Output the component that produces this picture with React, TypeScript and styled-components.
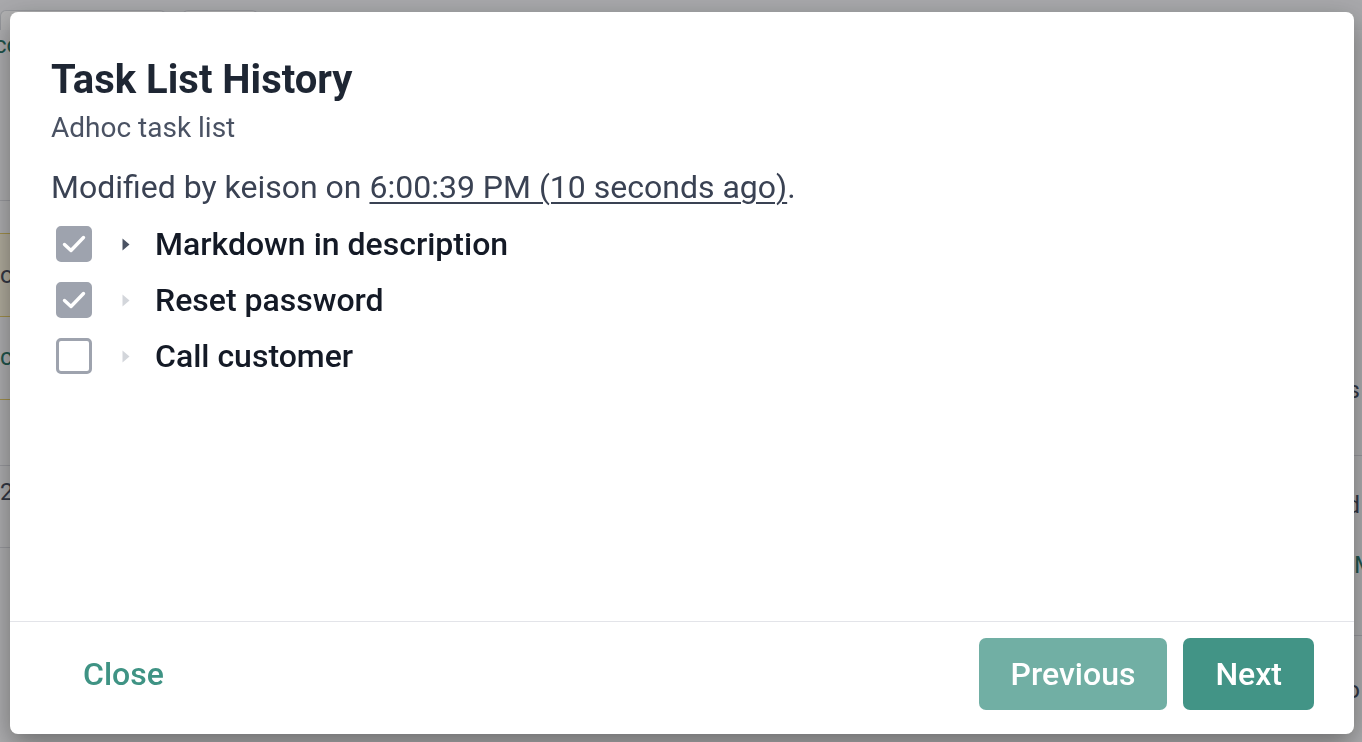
import React from "react";
import styled, { createGlobalStyle } from "styled-components";

const GlobalStyle = createGlobalStyle`
  html, body { margin: 0; padding: 0; }
  body {
    font-family: Roboto, "Liberation Sans", Arial, sans-serif;
    background: #ffffff;
    overflow: hidden;
  }
  * { box-sizing: border-box; }
`;

/* ---------- background page (behind the overlay) ---------- */

const Page = styled.div`
  height: 742px;
  background: #fbfbfc;
  display: flex;
  flex-direction: column;
  overflow: hidden;
`;

const TabBar = styled.div`
  height: 30px;
  display: flex;
  gap: 16px;
  align-items: flex-end;
  background: #f3f4f6;
`;

const Tab = styled.div<{ $w: number }>`
  width: ${(p) => p.$w}px;
  height: 20px;
  border: 1px solid #d9dbe0;
  border-bottom: none;
  border-radius: 6px 6px 0 0;
  background: #ffffff;
`;

const Columns = styled.div`
  flex: 1;
  display: flex;
  justify-content: space-between;
`;

const LeftCol = styled.div`
  width: 300px;
  display: flex;
  flex-direction: column;
`;

const RightCol = styled.div`
  width: 160px;
  display: flex;
  flex-direction: column;
  overflow: hidden;
`;

const BgText = styled.div<{ $mt: number; $teal?: boolean; $align?: string; $pl?: number; $ml?: number }>`
  margin-top: ${(p) => p.$mt}px;
  margin-left: ${(p) => p.$ml ?? 0}px;
  height: 30px;
  line-height: 30px;
  font-size: 24px;
  white-space: nowrap;
  color: ${(p) => (p.$teal ? "#2f7a6b" : "#4a5060")};
  text-align: ${(p) => p.$align || "left"};
  padding-left: ${(p) => p.$pl ?? 0}px;
  padding-right: 2px;
`;

const BgLine = styled.div<{ $mt: number; $yellow?: boolean }>`
  margin-top: ${(p) => p.$mt}px;
  height: 1px;
  background: ${(p) => (p.$yellow ? "#e8cf6a" : "#dcdde2")};
`;

const YellowBox = styled.div<{ $mt: number }>`
  margin-top: ${(p) => p.$mt}px;
  height: 84px;
  border-top: 1px solid #e8cf6a;
  border-bottom: 1px solid #e8cf6a;
  background: #fdf7e0;
  display: flex;
  align-items: center;
  padding-left: 0;
  font-size: 24px;
  color: #4a5060;
`;

const Overlay = styled.div`
  position: fixed;
  inset: 0;
  background: rgba(0, 0, 6, 0.31);
`;

/* ---------- modal ---------- */

const Modal = styled.div`
  position: fixed;
  top: 12px;
  left: 10px;
  width: 1344px;
  height: 722px;
  background: #ffffff;
  border-radius: 8px;
  box-shadow: 0 10px 28px rgba(0, 0, 0, 0.38);
  display: flex;
  flex-direction: column;
`;

const Header = styled.header`
  padding: 44px 40px 0 41px;
`;

const Title = styled.h2`
  margin: 0;
  font-size: 40px;
  line-height: 48px;
  font-weight: 700;
  color: #1e2633;
`;

const Subtitle = styled.div`
  margin-top: 3px;
  font-size: 28px;
  line-height: 42px;
  color: #4a5263;
`;

const Body = styled.div`
  flex: 1;
  padding: 14px 40px 0 41px;
`;

const Modified = styled.p`
  margin: 0;
  font-size: 32px;
  line-height: 48px;
  color: #3a4253;
`;

const TimeLink = styled.span`
  text-decoration: underline;
  text-underline-offset: 4px;
  text-decoration-thickness: 2px;
`;

const List = styled.ul`
  margin: 5px 0 0;
  padding: 0 0 0 5px;
  list-style: none;
`;

const Row = styled.li`
  height: 56px;
  display: flex;
  align-items: center;
`;

const Box = styled.span<{ $checked: boolean }>`
  width: 36px;
  height: 36px;
  border-radius: 5px;
  flex: none;
  display: flex;
  align-items: center;
  justify-content: center;
  background: ${(p) => (p.$checked ? "#9ea3ae" : "#ffffff")};
  border: 3px solid #9ea3ae;
`;

const Caret = styled.span<{ $active: boolean }>`
  width: 24px;
  height: 24px;
  margin-left: 22px;
  flex: none;
  display: flex;
  align-items: center;
  justify-content: center;
  color: ${(p) => (p.$active ? "#4a5263" : "#d3d6db")};
`;

const Label = styled.span`
  margin-left: 17px;
  font-size: 32px;
  font-weight: 500;
  color: #141a26;
`;

const Footer = styled.footer`
  border-top: 1px solid #e3e4e9;
  padding: 16px 40px 24px 41px;
  display: flex;
  justify-content: space-between;
  align-items: center;
`;

const Actions = styled.div`
  display: flex;
  gap: 16px;
`;

const Button = styled.button<{ $variant: "ghost" | "solid" | "faded" }>`
  height: 72px;
  padding: 0 32px;
  border: none;
  border-radius: 7px;
  font-family: inherit;
  font-size: 32px;
  font-weight: 500;
  cursor: pointer;
  background: ${(p) =>
    p.$variant === "ghost" ? "transparent" : p.$variant === "faded" ? "#71afa4" : "#429486"};
  color: ${(p) => (p.$variant === "ghost" ? "#3f9384" : "#ffffff")};
`;

const tasks = [
  { label: "Markdown in description", checked: true, active: true },
  { label: "Reset password", checked: true, active: false },
  { label: "Call customer", checked: false, active: false },
];

const CheckIcon = () => (
  <svg width="26" height="26" viewBox="0 0 26 26" fill="none">
    <polyline
      points="3.5,13.5 10,19.5 22.5,6.5"
      stroke="#ffffff"
      strokeWidth="3.4"
      strokeLinecap="round"
      strokeLinejoin="round"
    />
  </svg>
);

const CaretIcon = () => (
  <svg width="8" height="13" viewBox="0 0 8 13">
    <path d="M0.5 0.5 L7.5 6.5 L0.5 12.5 Z" fill="currentColor" />
  </svg>
);

export default function App() {
  return (
    <>
      <GlobalStyle />
      <Page>
        <TabBar>
          <Tab $w={166} />
          <Tab $w={76} />
        </TabBar>
        <Columns>
          <LeftCol>
            <BgText $mt={0} $teal $ml={-6}>
              co
            </BgText>
            <BgLine $mt={140} />
            <YellowBox $mt={32}>o</YellowBox>
            <BgText $mt={25} $teal>
              c
            </BgText>
            <BgLine $mt={27} $yellow />
            <BgLine $mt={65} />
            <BgText $mt={11}>2.</BgText>
            <BgLine $mt={40} />
          </LeftCol>
          <RightCol>
            <BgText $mt={345} $align="right">
              Status
            </BgText>
            <BgLine $mt={50} />
            <BgText $mt={34} $align="right">
              Assigned
            </BgText>
            <BgText $mt={30} $teal $pl={152}>
              Me
            </BgText>
            <BgLine $mt={55} />
            <BgText $mt={39} $align="right">
              Todo
            </BgText>
          </RightCol>
        </Columns>
      </Page>
      <Overlay />
      <Modal role="dialog" aria-labelledby="history-title">
        <Header>
          <Title id="history-title">Task List History</Title>
          <Subtitle>Adhoc task list</Subtitle>
        </Header>
        <Body>
          <Modified>
            Modified by keison on <TimeLink>6:00:39 PM (10 seconds ago)</TimeLink>.
          </Modified>
          <List>
            {tasks.map((t) => (
              <Row key={t.label}>
                <Box $checked={t.checked}>{t.checked && <CheckIcon />}</Box>
                <Caret $active={t.active}>
                  <CaretIcon />
                </Caret>
                <Label>{t.label}</Label>
              </Row>
            ))}
          </List>
        </Body>
        <Footer>
          <Button $variant="ghost">Close</Button>
          <Actions>
            <Button $variant="faded">Previous</Button>
            <Button $variant="solid">Next</Button>
          </Actions>
        </Footer>
      </Modal>
    </>
  );
}
